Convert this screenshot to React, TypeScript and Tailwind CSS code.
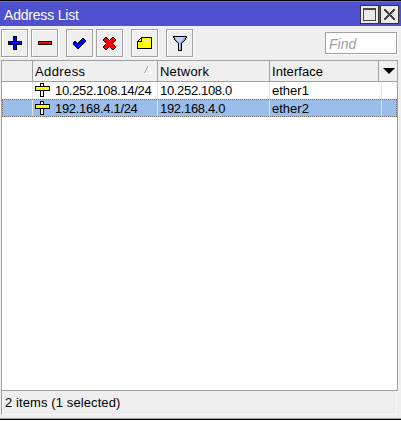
import React from "react";

const COLORS: Record<string, string> = {
  k: "#000000", b: "#0000ff", r: "#ff0000", y: "#ffff00", w: "#ffffff",
  l: "#c6d3f4", m: "#8fa5dc", g: "#f0f0b0", o: "#a3a3a3", n: "#454545",
};

function Pixels({ rows, className = "" }: { rows: string[]; className?: string }) {
  return (
    <svg className={`block shrink-0 ${className}`} width={rows[0].length} height={rows.length} shapeRendering="crispEdges" aria-hidden="true">
      {rows.flatMap((row, y) =>
        [...row].map((c, x) => COLORS[c] ? <rect key={`${x}-${y}`} x={x} y={y} width="1" height="1" fill={COLORS[c]} /> : null)
      )}
    </svg>
  );
}

const PLUS = [
  ".....kkkk.....", ".....kbbk.....", ".....kbbk.....", ".....kbbk.....", ".....kbbk.....",
  "kkkkkkbbkkkkkk", "kbbbbbbbbbbbbk", "kbbbbbbbbbbbbk", "kkkkkkbbkkkkkk",
  ".....kbbk.....", ".....kbbk.....", ".....kbbk.....", ".....kbbk.....", ".....kkkk.....",
];
const MINUS = ["kkkkkkkkkkkkkk", "krrrrrrrrrrrrk", "krrrrrrrrrrrrk", "kkkkkkkkkkkkkk"];
const CHECK = [
  ".........kk..",
  "........kbbk.",
  ".......kbbbbk",
  ".kk...kbbbbbk",
  "kbbk.kbbbbbk.",
  "kbbbkbbbbbk..",
  "kbbbbbbbbk...",
  ".kbbbbbbk....",
  "..kbbbbk.....",
  "...kbbk......",
  "....kk.......",
];
const CROSS = [
  "..kk.....kk..",
  ".krrk...krrk.",
  "krrrrk.krrrrk",
  "krrrrrkrrrrrk",
  ".krrrrrrrrrk.",
  "..krrrrrrrk..",
  "...krrrrrk...",
  "..krrrrrrrk..",
  ".krrrrrrrrrk.",
  "krrrrrkrrrrrk",
  "krrrrk.krrrrk",
  ".krrk...krrk.",
  "..kk.....kk..",
];
const NOTE = [
  "....kkkkkkkkkkk",
  "...kkyyyyyyyyyk",
  "..kykyyyyyyyyyk",
  ".kyykyygygygyyk",
  "kkkkkygygygyyyk",
  "kyyygyyygygyyyk",
  "kyyyyyyyyyyyyyk",
  "kyyyyyyyyyyyyyk",
  "kyyyyyyyyyyyyyk",
  "kyyyyyyyyyyyyyk",
  "kyyyyyyyyyyyyyk",
  "kkkkkkkkkkkkkkk",
];
const FUNNEL = [
  "kkkkkkkkkkkkkk",
  "kmlllllllllmmk",
  ".kmlllllllmmk.",
  ".kmlllllllmmk.",
  "..kmlllllmmk..",
  "...kmlllmmk...",
  "....kmlmmk....",
  ".....klmk.....",
  ".....klmk.....",
  ".....klmk.....",
  ".....klmk.....",
  ".....klmk.....",
  ".....klmk.....",
  ".....klmk.....",
  ".....kkkk.....",
];
const SIGN = [
  ".....kkkk......",
  ".....kwwk......",
  ".....kwwk......",
  "kkkkkkkkkkkkkkk",
  "kyyyyyyyyyyyyyk",
  "kyyyyyyyyyyyyyk",
  "kyyyyyyyyyyyyyk",
  "kkkkkkkkkkkkkkk",
  ".....kwwk......",
  ".....kwwk......",
  ".....kwwk......",
  ".....kwwk......",
  ".....kwwk......",
  ".....kkkk......",
];
const SORT = [
  "....ow....",
  "....oww...",
  "...o..w...",
  "...o..ww..",
  "..o....w..",
  "..o....ww.",
  ".o......w.",
  ".wwwwwwwww",
];
const CLOSE = [
  "nn.......nn", "nnn.....nnn", ".nnn...nnn.", "..nnn.nnn..", "...nnnnn...", "....nnn....",
  "...nnnnn...", "..nnn.nnn..", ".nnn...nnn.", "nnn.....nnn", "nn.......nn",
];

function ToolButton({ label, rows, className = "" }: { label: string; rows: string[]; className?: string }) {
  return (
    <button aria-label={label} className={`flex h-7 w-[27px] items-center justify-center border border-[#a0a0a0] bg-[#efefef] shadow-[1px_1px_0_#ffffff,inset_1px_1px_0_#ffffff] ${className}`}>
      <Pixels rows={rows} />
    </button>
  );
}

const ROWS = [
  { address: "10.252.108.14/24", network: "10.252.108.0", iface: "ether1", selected: false },
  { address: "192.168.4.1/24", network: "192.168.4.0", iface: "ether2", selected: true },
];

export default function App() {
  return (
    <div className="flex h-[421px] w-[401px] flex-col overflow-hidden bg-[#efefef] font-['Liberation_Sans',Arial,sans-serif] text-[13px] leading-4 text-black">
      <header className="flex h-[26px] shrink-0 items-start border-t border-black bg-[#4f50cd] shadow-[inset_0_1px_0_#7474bc]">
        <h1 className="grow pt-[6px] pl-1 text-[14px] tracking-[-0.2px] text-white">Address List</h1>
        <div className="mt-1 mr-[2px] flex gap-px">
          <button aria-label="Maximize" className="flex h-[19px] w-[19px] items-center justify-center border border-[#333333] bg-[#eee9e9]">
            <span className="h-[13px] w-[13px] border border-t-2 border-[#454545]" />
          </button>
          <button aria-label="Close" className="flex h-[19px] w-[19px] items-center justify-center border border-[#333333] bg-[#eee9e9]">
            <Pixels rows={CLOSE} />
          </button>
        </div>
      </header>
      <div className="flex h-[34px] shrink-0 items-start pt-[3px] pr-1 pl-px">
        <ToolButton label="Add" rows={PLUS} />
        <ToolButton label="Remove" rows={MINUS} className="ml-[3px]" />
        <ToolButton label="Enable" rows={CHECK} className="ml-2" />
        <ToolButton label="Disable" rows={CROSS} className="ml-[3px]" />
        <ToolButton label="Comment" rows={NOTE} className="ml-2" />
        <ToolButton label="Filter" rows={FUNNEL} className="ml-2" />
        <div className="mt-[3px] ml-auto h-[22px] w-[72px] border border-[#a0a0a0] bg-white pt-[3px] pl-[3px] text-[14px] text-[#a0a0a0] italic shadow-[1px_1px_0_#ffffff]">Find</div>
      </div>
      <main className="ml-px flex h-[331px] w-[397px] shrink-0 flex-col border border-[#a0a0a0] bg-white">
        <div className="flex h-[21px] shrink-0 border-b border-[#a0a0a0] bg-[#efefef]">
          <div className="w-[31px] border-r border-[#a0a0a0]" />
          <div className="flex w-[125px] border-r border-[#a0a0a0] pt-[3px] pl-0.5">
            <span className="grow tracking-[0.4px]">Address</span>
            <Pixels rows={SORT} className="mt-0.5 mr-1" />
          </div>
          <div className="w-28 border-r border-[#a0a0a0] pt-[3px] pl-0.5 tracking-[0.2px]">Network</div>
          <div className="w-[109px] border-r border-[#a0a0a0] pt-[3px] pl-0.5 tracking-[0.05px]">Interface</div>
          <svg className="mt-[7px] ml-1 block" width="12" height="6"><path d="M0 0H12L6 6Z" fill="black" /></svg>
        </div>
        {ROWS.map((row) => (
          <div key={row.network} className={`flex shrink-0 ${row.selected ? "h-[18px] border border-dotted border-[#77736d] bg-[#9bbde9]" : "h-[17px]"}`}>
            <div className={`border-r border-[#e5e5e5] ${row.selected ? "w-[30px]" : "w-[31px]"}`} />
            <div className="flex w-[125px] border-r border-[#e5e5e5] pt-px pl-0.5">
              <Pixels rows={SIGN} />
              <span className="ml-[5px] tracking-[-0.3px] whitespace-nowrap">{row.address}</span>
            </div>
            <div className="w-28 border-r border-[#e5e5e5] pt-px pl-0.5 tracking-[-0.33px]">{row.network}</div>
            <div className="w-28 border-r border-[#e5e5e5] pt-px pl-0.5">{row.iface}</div>
          </div>
        ))}
      </main>
      <footer className="ml-px h-[24px] w-[396px] shrink-0 border-r border-b border-l border-r-[#f8f8f8] border-b-[#f8f8f8] border-l-[#a0a0a0] pt-1 pl-[3px] tracking-[0.1px]">2 items (1 selected)</footer>
      <div className="mt-[3px] h-[2px] shrink-0 border-t border-[#a0a0a0] bg-black" />
      <div className="h-px bg-white" />
    </div>
  );
}
